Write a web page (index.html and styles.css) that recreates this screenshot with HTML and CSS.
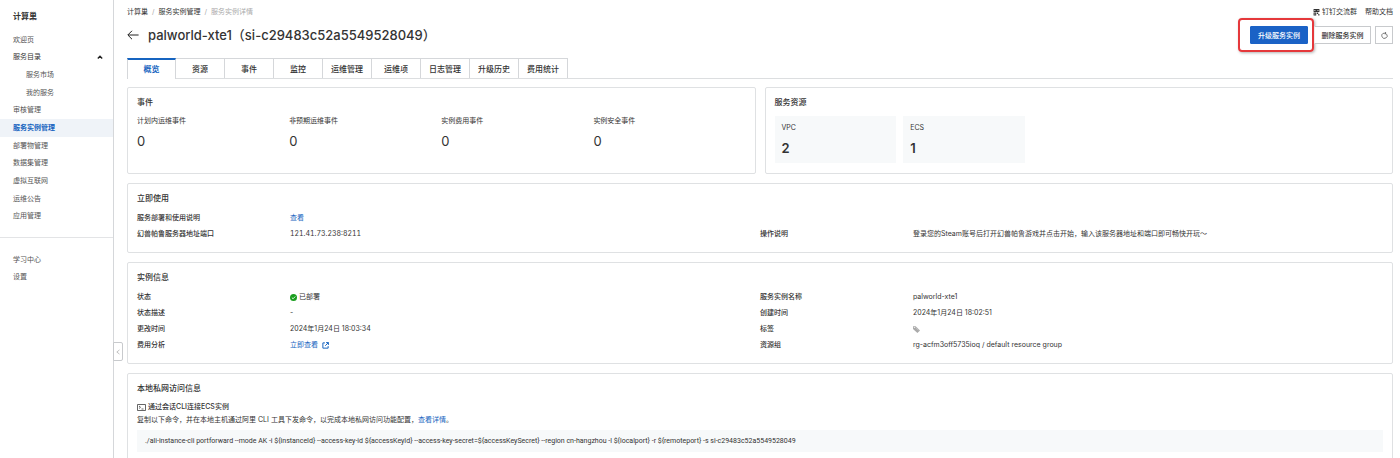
FILE: index.html
```html
<!DOCTYPE html>
<html lang="zh-CN">
<head>
    <meta charset="UTF-8">
    <meta name="viewport" content="width=device-width, initial-scale=1.0">
    <title>服务实例详情 - 计算巢</title>
    <link rel="stylesheet" href="styles.css">
</head>
<body>
    <div class="app">
        <aside class="sidebar">
            <h2 class="sidebar-title">计算巢</h2>
            <nav>
                <ul class="menu menu-main">
                    <li><a href="#">欢迎页</a></li>
                    <li>
                        <a href="#" class="group">服务目录
                            <svg class="caret" viewBox="0 0 8 8"><path d="M1.8 5.4 4 3.2l2.2 2.2" fill="none" stroke="#222" stroke-width="1.4"/></svg>
                        </a>
                    </li>
                    <li><a href="#" class="sub">服务市场</a></li>
                    <li><a href="#" class="sub">我的服务</a></li>
                    <li><a href="#">审核管理</a></li>
                    <li><a href="#" class="active">服务实例管理</a></li>
                    <li><a href="#">部署物管理</a></li>
                    <li><a href="#">数据集管理</a></li>
                    <li><a href="#">虚拟互联网</a></li>
                    <li><a href="#">运维公告</a></li>
                    <li><a href="#">应用管理</a></li>
                </ul>
                <ul class="menu menu-extra">
                    <li><a href="#">学习中心</a></li>
                    <li><a href="#">设置</a></li>
                </ul>
            </nav>
            <button class="collapse" aria-label="收起菜单">
                <svg viewBox="0 0 8 8"><path d="M6 1.2 2.4 4 6 6.8" fill="none" stroke="#999" stroke-width="0.8"/></svg>
            </button>
        </aside>

        <main class="main">
            <div class="topbar">
                <nav class="breadcrumb">
                    <a href="#">计算巢</a>
                    <span class="sep">/</span>
                    <a href="#">服务实例管理</a>
                    <span class="sep">/</span>
                    <span class="current">服务实例详情</span>
                </nav>
                <div class="top-links">
                    <a href="#" class="ding">
                        <svg class="qr" viewBox="0 0 12 12"><path d="M1 0h10v5H1zM1 6h4.500v5H1zM6.500 6H9v2.500H6.500zM9 8.500h2V11H9z" fill="#333"/><path d="M2.500 1.800h1.500v1.500H2.500zM7.800 1.800h1.500v1.500H7.800zM2.500 7.800h1.500v1.500H2.500z" fill="#fff"/></svg>
                        钉钉交流群
                    </a>
                    <a href="#">帮助文档</a>
                </div>
            </div>

            <div class="page-head">
                <a href="#" class="back" aria-label="返回">
                    <svg viewBox="0 0 12 12"><path d="M11.600 6H1M5 1.800.8 6 5 10.200" fill="none" stroke="#222" stroke-width="1"/></svg>
                </a>
                <h1>palworld-xte1（si-c29483c52a5549528049）</h1>
                <div class="actions">
                    <div class="highlight">
                        <button class="btn btn-primary">升级服务实例</button>
                    </div>
                    <button class="btn btn-delete">删除服务实例</button>
                    <button class="btn btn-icon" aria-label="刷新">
                        <svg viewBox="0 0 12 12"><path d="M9.500 3.600A4.500 4.500 0 1 1 5 2.100h3.500M6.600 0l2.200 2.100-2.200 2.100" fill="none" stroke="#444" stroke-width="1.200"/></svg>
                    </button>
                </div>
            </div>

            <div class="tabs" role="tablist">
                <button class="tab active" role="tab">概览</button>
                <button class="tab" role="tab">资源</button>
                <button class="tab" role="tab">事件</button>
                <button class="tab" role="tab">监控</button>
                <button class="tab" role="tab">运维管理</button>
                <button class="tab" role="tab">运维项</button>
                <button class="tab" role="tab">日志管理</button>
                <button class="tab" role="tab">升级历史</button>
                <button class="tab" role="tab">费用统计</button>
            </div>

            <div class="cards">
                <div class="card-row">
                    <section class="card">
                        <h3>事件</h3>
                        <div class="stats">
                            <div class="stat"><p>计划内运维事件</p><strong>0</strong></div>
                            <div class="stat"><p>非预期运维事件</p><strong>0</strong></div>
                            <div class="stat"><p>实例费用事件</p><strong>0</strong></div>
                            <div class="stat"><p>实例安全事件</p><strong>0</strong></div>
                        </div>
                    </section>
                    <section class="card">
                        <h3>服务资源</h3>
                        <div class="tiles">
                            <div class="stat tile"><p>VPC</p><strong>2</strong></div>
                            <div class="stat tile"><p>ECS</p><strong>1</strong></div>
                        </div>
                    </section>
                </div>

                <section class="card">
                    <h3>立即使用</h3>
                    <dl class="info">
                        <dt>服务部署和使用说明</dt>
                        <dd class="wide"><a href="#">查看</a></dd>
                        <dt>幻兽帕鲁服务器地址端口</dt>
                        <dd class="digits">121.41.73.238:8211</dd>
                        <dt>操作说明</dt>
                        <dd>登录您的Steam账号后打开幻兽帕鲁游戏并点击开始，输入该服务器地址和端口即可畅快开玩～</dd>
                    </dl>
                </section>

                <section class="card">
                    <h3>实例信息</h3>
                    <dl class="info">
                        <dt>状态</dt>
                        <dd>
                            <svg class="icon" viewBox="0 0 12 12"><circle cx="6" cy="6" r="6" fill="#1a9e1f"/><path d="M3.200 6.200 5.300 8.200 9 4.300" fill="none" stroke="#fff" stroke-width="1.500"/></svg>
                            已部署
                        </dd>
                        <dt>服务实例名称</dt>
                        <dd>palworld-xte1</dd>
                        <dt>状态描述</dt>
                        <dd>-</dd>
                        <dt>创建时间</dt>
                        <dd>2024年1月24日 18:02:51</dd>
                        <dt>更改时间</dt>
                        <dd>2024年1月24日 18:03:34</dd>
                        <dt>标签</dt>
                        <dd>
                            <svg class="icon" viewBox="0 0 12 12"><path d="M0 .5h4.500L12 7.500 7.500 11.800 0 5z" fill="#aaa"/><path d="M4.500 2.500 9.500 7.500" stroke="#ddd" stroke-width=".8"/><circle cx="2.300" cy="2.700" r=".9" fill="#fff"/></svg>
                        </dd>
                        <dt>费用分析</dt>
                        <dd>
                            <a href="#">立即查看
                                <svg class="icon external" viewBox="0 0 12 12"><path d="M5 1.500H1.500v9h9V7M7 1h4v4M11 1 5.500 6.500" fill="none" stroke="#1664c0" stroke-width="1.700"/></svg>
                            </a>
                        </dd>
                        <dt>资源组</dt>
                        <dd>rg-acfm3off5735ioq / default resource group</dd>
                    </dl>
                </section>

                <section class="card">
                    <h3>本地私网访问信息</h3>
                    <h4>
                        <svg class="terminal" viewBox="0 0 18 14"><path d="M1 1h16v12H1zM4 4l3 2.500L4 9M9 10h4" fill="none" stroke="#333" stroke-width="1.500"/></svg>
                        通过会话CLI连接ECS实例
                    </h4>
                    <p class="desc">复制以下命令，并在本地主机通过阿里 CLI 工具下发命令，以完成本地私网访问功能配置，<a href="#">查看详情</a>。</p>
                    <pre class="code">./ali-instance-cli portforward --mode AK -i ${instanceId} --access-key-id ${accessKeyId} --access-key-secret=${accessKeySecret} --region cn-hangzhou -l ${localport} -r ${remoteport} -s si-c29483c52a5549528049</pre>
                </section>
            </div>
        </main>
    </div>
</body>
</html>
```
FILE: styles.css
```css
* {
    margin: 0;
    padding: 0;
    box-sizing: border-box;
}

body {
    font-family: Inter, "Noto Sans CJK SC", sans-serif;
    font-size: 7px;
    line-height: 14px;
    color: #333;
    background: #fff;
}

a {
    color: #1664c0;
    text-decoration: none;
}

ul {
    list-style: none;
}

button {
    font-family: inherit;
    cursor: pointer;
}

svg {
    display: block;
    flex: none;
}

.app {
    display: flex;
    height: 100vh;
    overflow: hidden;
}

/* Sidebar */
.sidebar {
    position: relative;
    flex: none;
    width: 114px;
    border-right: 1px solid #d5d7da;
}

.sidebar-title {
    padding: 9px 13px 7px;
    font-size: 8px;
    font-weight: 700;
    line-height: 15px;
}

.menu {
    display: grid;
    grid-auto-rows: 1fr;
}

.menu-main {
    height: 194px;
}

.menu-extra {
    height: 49px;
    margin-top: 12px;
    padding-top: 13px;
    border-top: 1px solid #e3e4e6;
}

.menu a {
    display: flex;
    align-items: center;
    height: 100%;
    padding: 0 9px 0 13px;
    color: #555;
}

.menu .group {
    justify-content: space-between;
    color: #333;
}

.menu .sub {
    padding-left: 26px;
}

.menu .active {
    background: #eff3f8;
    color: #1664c0;
    font-weight: 700;
}

.caret {
    width: 8px;
    height: 8px;
}

.collapse {
    position: absolute;
    top: 342px;
    right: -10px;
    display: flex;
    align-items: center;
    justify-content: center;
    width: 10px;
    height: 19px;
    background: #fff;
    border: 1px solid #c8cacd;
    border-radius: 0 2px 2px 0;
}

.collapse svg {
    width: 6px;
    height: 8px;
}

/* Header */
.main {
    flex: 1;
    min-width: 0;
    padding: 5px 7px 0 13px;
}

.topbar,
.breadcrumb,
.top-links,
.ding,
.page-head,
.actions {
    display: flex;
    align-items: center;
}

.topbar {
    justify-content: space-between;
}

.breadcrumb {
    gap: 4px;
}

.breadcrumb a,
.top-links a {
    color: #333;
}

.breadcrumb .sep,
.breadcrumb .current {
    color: #aaa;
}

.top-links {
    gap: 8px;
}

.ding {
    gap: 2px;
}

.qr {
    width: 7px;
    height: 7px;
}

.page-head {
    height: 32px;
}

.back svg {
    width: 12px;
    height: 12px;
}

.page-head h1 {
    margin-left: 9px;
    font-size: 13px;
    font-weight: 500;
    line-height: 20px;
}

.actions {
    margin-left: auto;
}

.highlight {
    padding: 6px 4px 6px 10px;
    border: 2px solid #e5383b;
    border-radius: 4px;
    box-shadow: 1px 1px 3px rgba(0, 0, 0, 0.3);
}

.btn {
    display: flex;
    align-items: center;
    justify-content: center;
    width: 58px;
    height: 18px;
    border: 1px solid #c8cacd;
    background: #fff;
    color: #333;
    font-size: 7px;
    font-weight: 500;
}

.btn-primary {
    border-color: #1a62c6;
    background: #1a62c6;
    color: #fff;
    border-radius: 1px;
}

.btn-delete {
    width: 57px;
    border-left-color: #eee;
}

.btn-icon {
    width: 18px;
    margin-left: 4px;
}

.btn-icon svg {
    width: 7px;
    height: 7px;
}

/* Tabs */
.tabs {
    display: flex;
    height: 21px;
    margin-top: 7px;
    border-bottom: 1px solid #dcdee0;
}

.tab {
    width: 49px;
    height: 20px;
    border: solid #d5d7da;
    border-width: 1px 1px 0 0;
    background: #fff;
    color: #333;
    font-size: 8px;
    font-weight: 500;
}

.tab.active {
    height: 21px;
    padding-bottom: 2px;
    border-top: 2px solid #1664c0;
    border-left-width: 1px;
    color: #1664c0;
    font-weight: 700;
}

/* Cards */
.cards {
    display: flex;
    flex-direction: column;
    gap: 9px;
    margin-top: 8px;
}

.card-row {
    display: grid;
    grid-template-columns: 1fr 1fr;
    gap: 9px;
}

.card {
    padding: 7px 9px 10px;
    border: 1px solid #dfe1e3;
    border-radius: 2px;
}

.card h3 {
    margin-bottom: 5px;
    font-size: 8px;
    font-weight: 500;
    line-height: 14px;
}

.stats {
    display: grid;
    grid-template-columns: repeat(4, 1fr);
}

.stat strong {
    display: block;
    margin-top: 3px;
    font-size: 13px;
    font-weight: 400;
    line-height: 20px;
}

.tiles {
    display: grid;
    grid-template-columns: 20% 20%;
    gap: 7px;
    margin-top: 7px;
}

.tile {
    padding: 5px 7px;
    background: #f7f9fa;
}

.tile strong {
    font-weight: 600;
}

.info {
    display: grid;
    grid-template-columns: 153px 1fr 153px 1fr;
    line-height: 16px;
}

.info dt {
    font-weight: 500;
}

.info dd,
.info dd a {
    display: flex;
    align-items: center;
    gap: 2px;
    white-space: nowrap;
}

.info .wide {
    grid-column: span 3;
}

.info .digits {
    font-variant-numeric: tabular-nums;
}

.icon {
    width: 7px;
    height: 7px;
}

.external {
    margin-left: 2px;
}

.card h4 {
    display: flex;
    align-items: center;
    gap: 2px;
    font-size: 7px;
    font-weight: 500;
}

.terminal {
    width: 9px;
    height: 7px;
}

.desc {
    line-height: 12px;
}

.code {
    margin-top: 4px;
    padding: 4px 8px;
    background: #f7f9fa;
    font-family: Roboto, sans-serif;
}
```
